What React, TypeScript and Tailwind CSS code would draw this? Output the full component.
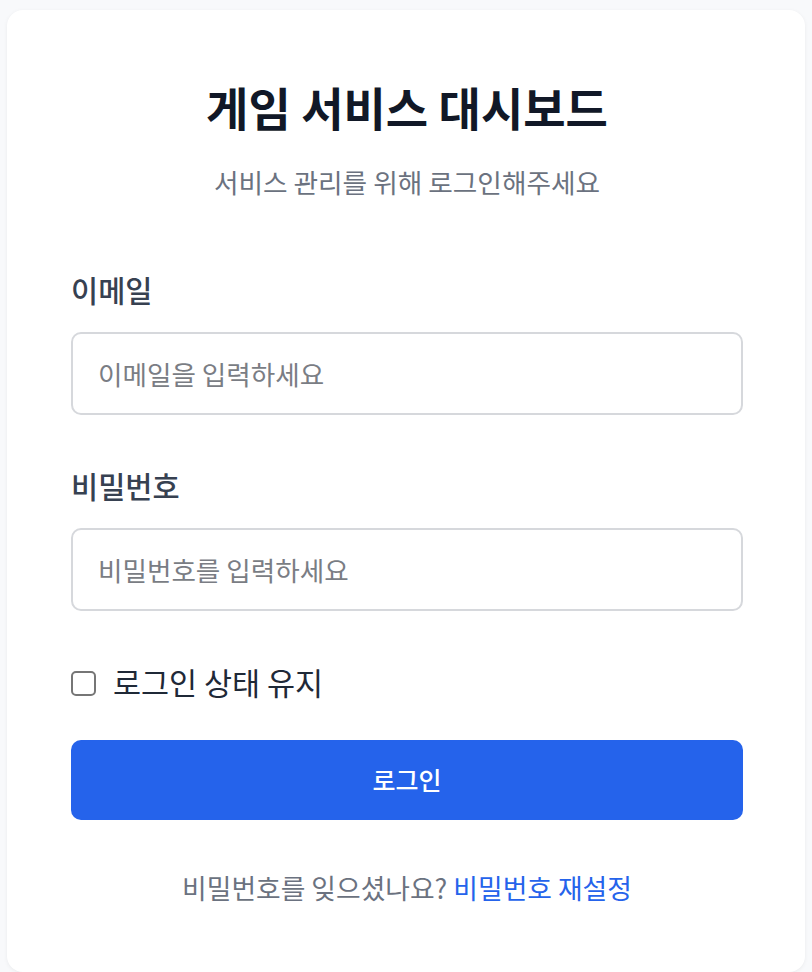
const font = { fontFamily: '"Noto Sans CJK KR", "Noto Sans", sans-serif' };

const Field = ({ label, placeholder, type, first }: { label: string; placeholder: string; type: string; first?: boolean }) => (
  <div className={first ? 'mt-[75px]' : 'mt-[54px]'}>
    <label className="block text-[29.5px] font-medium leading-8 text-[#374151]">{label}</label>
    <input
      type={type}
      placeholder={placeholder}
      className="mt-[27px] block h-[83px] w-full rounded-[10px] border-2 border-[#d6d8dc] bg-white px-[25px] text-[26.6px] text-gray-900 outline-none placeholder:text-[#7a7d84]"
    />
  </div>
);

export default function App() {
  return (
    <div className="min-h-[972px] bg-[#f8f9fb] px-[7px] pt-[10px]" style={font}>
      <div className="h-[962px] rounded-2xl bg-white pl-16 pr-[62px] pt-[72px] shadow-[0_1px_4px_rgba(0,0,0,0.06)]">
        <h1 className="text-center text-[46px] font-bold leading-[48px] text-[#111827]">게임 서비스 대시보드</h1>
        <p className="mt-[36px] text-center text-[26.7px] leading-8 text-[#6b7280]">서비스 관리를 위해 로그인해주세요</p>

        <Field first label="이메일" placeholder="이메일을 입력하세요" type="email" />
        <Field label="비밀번호" placeholder="비밀번호를 입력하세요" type="password" />

        {/* remember me */}
        <label className="mt-[56px] flex h-8 items-center gap-[17px]">
          <span className="h-[25px] w-[25px] rounded-[5px] border-2 border-[#767676] bg-white" />
          <span className="-mt-[3px] text-[30.5px] leading-8 text-[#1f2937]">로그인 상태 유지</span>
        </label>

        <button className="mt-[41px] flex h-20 w-full items-center justify-center rounded-[10px] bg-[#2563eb] text-[25px] font-medium text-white">
          로그인
        </button>

        <p className="mt-[52px] text-center text-[26.8px] leading-8 text-[#6b7280]">
          비밀번호를 잊으셨나요? <a className="text-[#2563eb]">비밀번호 재설정</a>
        </p>
      </div>
    </div>
  );
}
